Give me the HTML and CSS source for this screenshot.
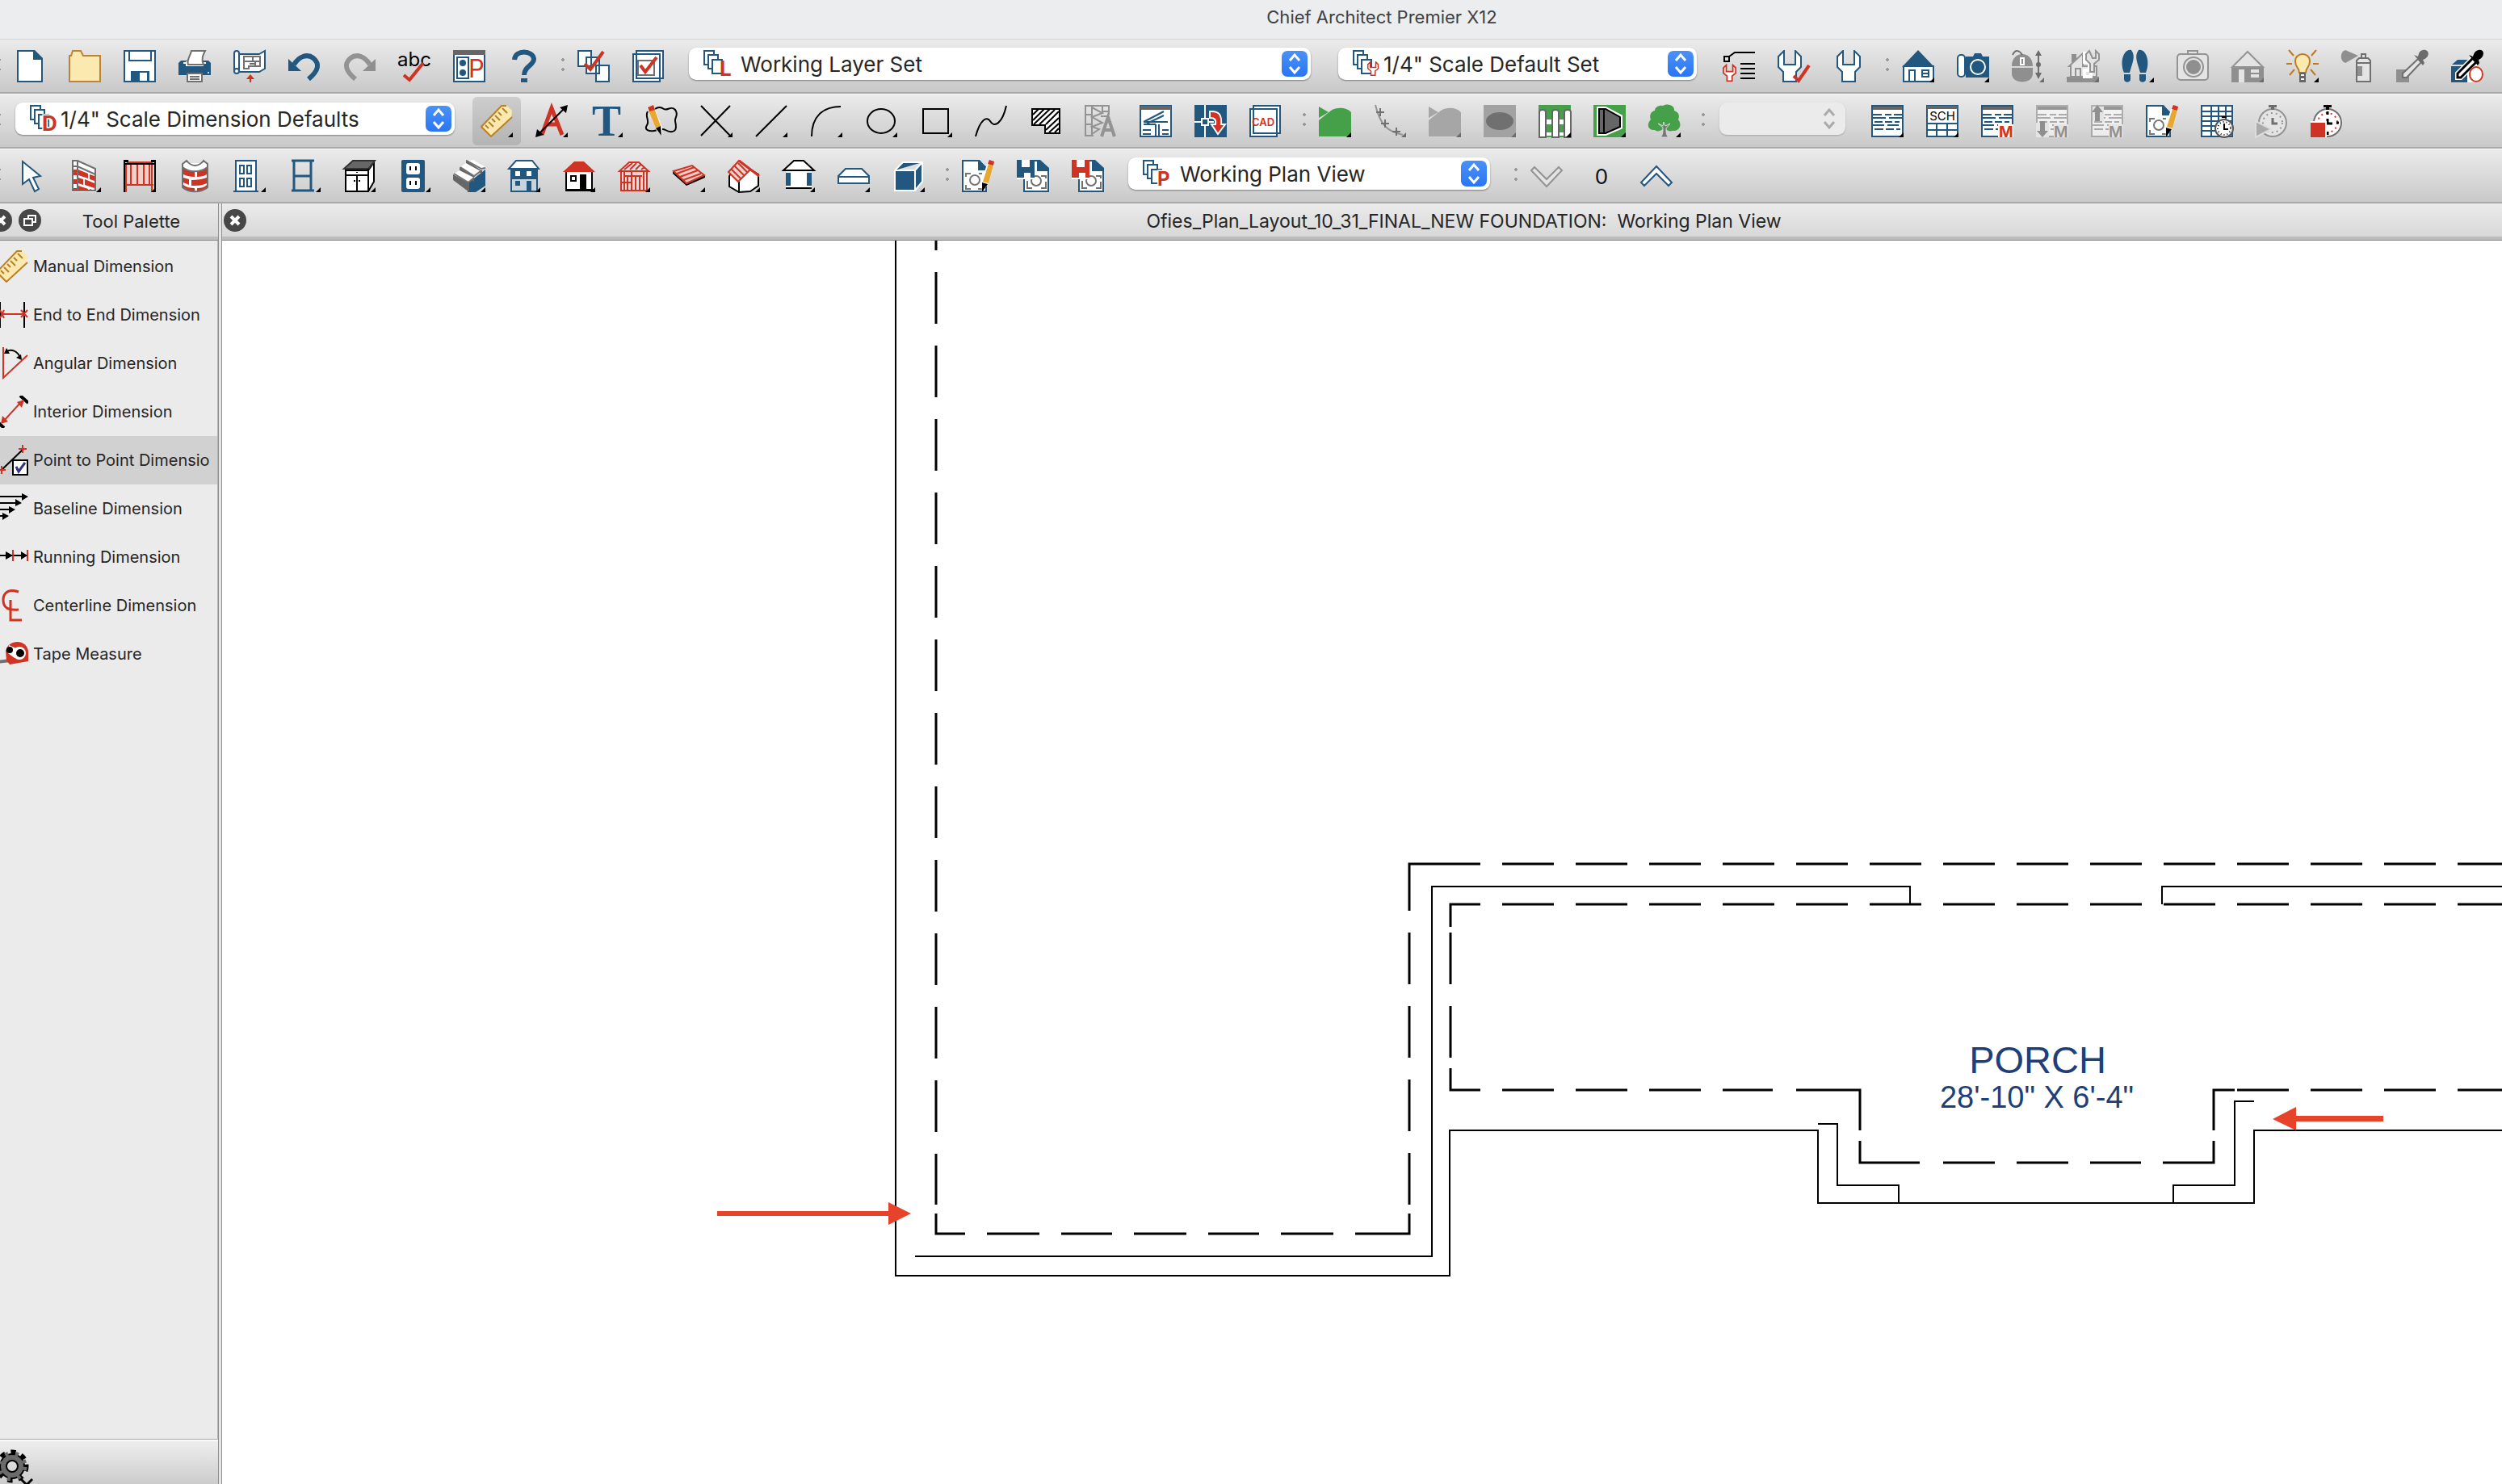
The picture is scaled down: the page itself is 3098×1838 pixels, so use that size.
FILE: index.html
```html
<!DOCTYPE html>
<html lang="en">
<head>
<meta charset="utf-8">
<title>Chief Architect Premier X12</title>
<link rel="stylesheet" href="styles.css">
</head>
<body>
<svg class="defs" aria-hidden="true">
  <symbol id="more" viewBox="0 0 40 40"><path d="M40 34v6h-6z"/></symbol>
  <symbol id="stack" viewBox="0 0 32 32"><g fill="#fff" stroke="#22577f" stroke-width="2"><path d="M1 1h12v17H1z"/><path d="M6 6h12v17H6z"/><path d="M11 12h12v17H11z"/></g></symbol>
  <symbol id="updown" viewBox="0 0 32 32"><path d="M10 12l6-7 6 7M10 20l6 7 6-7" fill="none" stroke="currentColor" stroke-width="3"/></symbol>
  <symbol id="pencilpage" viewBox="0 0 40 40"><path d="M1 1h20l9 9v29H1z" fill="#fff" stroke="#22577f" stroke-width="2"/><path d="M20 0h2l9 11v2H20z" fill="#22577f"/><path d="M5 21v-4h6M5 31v5h6M21 17h4M20 36h5" fill="none" stroke="#777" stroke-width="2"/><circle cx="16" cy="25" r="6" fill="#fff" stroke="#777" stroke-width="2"/><path d="M32 3l8 3-7 23-8 11-1-14z" fill="#fff"/><path d="M33 5l6 2-6 22-7-2z" fill="#e8a733"/><path d="M34 0l6 2-1 5-7-2z" fill="#cf3323"/><path d="M25 28l7 2-7 10z"/></symbol>
  <symbol id="schedule" viewBox="0 0 40 40"><path d="M1 1h38v38H1z" fill="#fff" stroke="currentColor" stroke-width="2"/><path d="M2 2h36v4H2z" fill="#666"/><path d="M2 12h11M17 12h8M28 12h10M2 16h16M22 16h16M4 21h10M17 21h9M29 21h6M2 25h14M20 25h14M4 30h11M18 30h10M31 30h5" stroke="currentColor" stroke-width="2"/></symbol>
  <symbol id="wrench" viewBox="0 0 40 40"><path d="M13 1L6 8v13l6 6v12h16V27l6-6V8l-7-7v17h-5l-4 0h-5z" fill="#fff" stroke="currentColor" stroke-width="2"/></symbol>
  <symbol id="wrench-small" viewBox="0 0 20 24"><path d="M5 1L1 5v7l5 4v7h7v-7l5-4V5l-4-4v9H5z" fill="#fff" stroke="#cf3323" stroke-width="2"/></symbol>
  <symbol id="ruler" viewBox="0 0 40 40"><path d="M25 1h8l6 6-1 10L13 39 1 27z" fill="#fbe9b0"/><path d="M39 15L13 39 1 27 26 1h6M27 4l6 6M22 9l4 4M18 13l6 6M14 17l4 4M10 21l6 6M6 25l4 4" fill="none" stroke="#b98025" stroke-width="2"/></symbol>
</svg>

<div class="app">
<header class="window-title"><h1>Chief Architect Premier X12</h1></header>

<div class="toolbar" role="toolbar" aria-label="Standard">
  <span class="grip"></span>
  <button class="tool" aria-label="New"><svg viewBox="0 0 40 40"><path class="sb fw" d="M5 1h20l10 10v28H5z"/><path class="fb" d="M24 0h2l10 10v2H24z"/></svg></button>
  <button class="tool" aria-label="Open"><svg viewBox="0 0 40 40"><path fill="#fbe9b0" stroke="#bd8338" d="M1 39V7h2l2-6h10l3 6h21v32z"/></svg></button>
  <button class="tool" aria-label="Save"><svg viewBox="0 0 40 40"><path class="sb fw" d="M1 1h38v38H1zM7 1h27v12H7z"/><path class="fb" d="M9 26h23v14H9z"/><path class="fw" d="M20 28h9v10h-9z"/></svg></button>
  <button class="tool" aria-label="Print"><svg viewBox="0 0 40 40"><path class="fb" d="M0 16l3-3h34l3 3v15H0z"/><path class="sw" d="M6 16h28"/><path class="fw" d="M9 14h22v6H9z"/><path class="fw sd" d="M12 18c-2-6 2-9 4-17h17c-3 6-5 10-2 17zM11 29h18v10H11z"/><path class="sd" d="M14 33h12M14 36h12"/><circle class="fw" cx="37" cy="28" r="1"/></svg></button>
  <button class="tool" aria-label="Send to Layout"><svg viewBox="0 0 40 40"><path class="sb fw" d="M6 5h26l7-4v22l-7 4H7z"/><path class="sb fw" d="M1 4c0-4 6-4 6 0v20c0 5-6 5-6 0z"/><circle class="sb fw" cx="4" cy="26" r="3"/><path class="sd" d="M13 8h20v12H19v3h-6zM24 8v5M13 14h8M20 14h13M27 14v6M20 17h6"/><path class="fr" d="M21 30l5 6h-4v4h-2v-4h-4z"/></svg></button>
  <button class="tool" aria-label="Undo"><svg viewBox="0 0 40 40"><path class="sb w6" d="M7 18C13 8 23 4 31 10c8 7 7 15-6 26"/><path class="fb" d="M0 11l16 15H0z"/></svg></button>
  <button class="tool" aria-label="Redo"><svg viewBox="0 0 40 40"><g transform="matrix(-1 0 0 1 40 0)"><path class="sg w6" d="M7 18C13 8 23 4 31 10c8 7 7 15-6 26"/><path class="fg" d="M0 11l16 15H0z"/></g></svg></button>
  <button class="tool" aria-label="Spell Check"><svg viewBox="0 0 40 40"><text x="20" y="20" text-anchor="middle" font-size="24">abc</text><path class="sr w4" d="M7 31l7 6L31 16"/></svg></button>
  <button class="tool" aria-label="Preferences"><svg viewBox="0 0 40 40"><path class="sb fw" d="M1 1h38v38H1z"/><path fill="#666" d="M0 0h40v6H0z"/><path class="sb" d="M5 9h14v26H5z"/><circle class="fb" cx="12" cy="16" r="4"/><circle class="fb" cx="12" cy="28" r="4"/><text class="fr" x="19" y="34" font-size="31">P</text></svg></button>
  <button class="tool" aria-label="Help"><svg viewBox="0 0 40 40"><path class="sb w6" d="M8 12C9-1 31 0 32 11c0 8-12 9-12 20"/><path class="fb" d="M16 35h8v5h-8z"/></svg></button>
  <span class="grip"></span>
  <button class="tool" aria-label="Layer Display"><svg viewBox="0 0 40 40"><path class="sb fw" d="M1 1h16v19H1zM11 9h16v20H11zM23 19h16v20H23z"/><path class="sr w4" d="M9 17l7 7L32 2"/></svg></button>
  <button class="tool" aria-label="Active Layer Display"><svg viewBox="0 0 40 40"><path class="sb fw" d="M5 1h33v34H5zM1 5h33v34H1z"/><path class="sd" d="M7 13h20v18H7z"/><path class="sr w4" d="M10 19l6 8L30 9"/></svg></button>
  <div class="combo combo-wide">
    <svg class="combo-icon" viewBox="0 0 32 32"><use href="#stack"/><text class="fr bold" x="20" y="32" font-size="26">L</text></svg>
    <select class="inset" aria-label="Layer set"><option>Working Layer Set</option></select>
    <svg class="combo-arrows" viewBox="0 0 32 32"><use href="#updown"/></svg>
  </div>
  <div class="combo combo-set">
    <svg class="combo-icon" viewBox="0 0 32 32"><use href="#stack"/><use href="#wrench-small" x="18" y="14" width="15" height="18"/></svg>
    <select aria-label="Default set"><option>1/4" Scale Default Set</option></select>
    <svg class="combo-arrows" viewBox="0 0 32 32"><use href="#updown"/></svg>
  </div>
  <button class="tool" aria-label="Default Settings"><svg viewBox="0 0 40 40"><path class="sk" d="M8 8l7-5h25M2 8h6v6H2zM22 17h18M22 23h18M22 29h18M22 35h18"/><use href="#wrench-small" x="0" y="17" width="18" height="23"/></svg></button>
  <button class="tool blue" aria-label="Active Defaults"><svg viewBox="0 0 40 40"><use href="#wrench" x="-5"/><path class="sr w4" d="M20 32l6 6L39 19"/></svg></button>
  <button class="tool blue" aria-label="Edit Defaults"><svg viewBox="0 0 40 40"><use href="#wrench"/></svg></button>
  <span class="grip"></span>
  <button class="tool" aria-label="Full Camera"><svg viewBox="0 0 40 40"><path class="sb fw" d="M2 20h37v19H2z"/><path class="fb" d="M20 0l20 21H0z"/><path class="sb" d="M9 39V25h7v14M25 25h8v8h-8zM25 29h8"/><use href="#more"/></svg></button>
  <button class="tool" aria-label="Camera"><svg viewBox="0 0 40 40"><path class="fb" d="M11 8h9l2-4h8l2 4h8v26H11z"/><rect class="sb fw" x="1" y="6" width="9" height="27" rx="4"/><circle class="sw" cx="26" cy="21" r="9"/><use href="#more"/></svg></button>
  <button class="tool" aria-label="Mouse Orbit" disabled><svg viewBox="0 0 40 40"><path class="fg" d="M0 20C0 0 26 0 26 20zM0 22h26v7c0 14-26 14-26 0z"/><path class="sd" d="M1 6c4-8 9-5 12 0"/><path class="sw fg" d="M11 10h4v8h-4z"/><path class="sd" d="M33 5v26"/><path class="fd" d="M33 0l4 7h-8zM33 36l4-8h-8z"/><circle class="fd" cx="33" cy="18" r="3"/><use class="fd" href="#more"/></svg></button>
  <button class="tool" aria-label="House Wizard" disabled><svg viewBox="0 0 40 40"><path class="fg" d="M0 33h40v7H0zM6 5h6v10H6z"/><path class="sg fl" d="M5 33V20H3L20 4v16h17v13h-9v-6h-7v6zM11 33V23h6v10"/><path class="sw w4 fl" d="M25 2v8l5 5v18h-8v-8h6v-10l-6 0V2M37 2v10l-5 3"/><path class="sg fl" d="M28 1l-4 4v7l5 5v10h5V17l6-5V5l-4-4v9h-4z"/><use class="fd" href="#more"/></svg></button>
  <button class="tool" aria-label="Walkthrough"><svg viewBox="0 0 40 40"><path class="fb" d="M12 0c6 8 1 16-2 28H3C-3 14 3-2 12 0zM3 30h8v6c0 5-8 5-8 0z"/><path class="fb" d="M21 0c-6 8-1 16 2 28h7C36 14 30-2 21 0zM22 30h8v6c0 5-8 5-8 0z"/><use href="#more"/></svg></button>
  <button class="tool" aria-label="Final View" disabled><svg viewBox="0 0 40 40"><path class="sg" d="M14 5V1h12v4"/><rect class="sg fl" x="1" y="5" width="38" height="32" rx="4"/><circle class="sg fl" cx="21" cy="21" r="12"/><circle class="fg" cx="21" cy="21" r="9"/></svg></button>
  <button class="tool" aria-label="Exterior View" disabled><svg viewBox="0 0 40 40"><path class="fg" d="M0 21h40v19H0z"/><path class="sg fl" d="M20 2l19 19H1z"/><path class="fl" d="M9 24h7v16H9zM24 24h10v4H24zM24 30h10v4H24z"/><use class="fd" href="#more"/></svg></button>
  <button class="tool" aria-label="Lights"><svg viewBox="0 0 40 40"><path stroke="#bd7b20" d="M3 0l6 7M37 0l-6 7M0 17h7M33 17h7M4 31l6-7M36 31l-6-7"/><path fill="#fbe9b0" stroke="#bd7b20" d="M16 28c0-7-5-6-5-14 0-12 18-12 18 0 0 8-5 7-5 14z"/><path fill="#666" d="M16 28h8v12h-8z"/><path class="sw" d="M18 31h4M18 36h4"/><use href="#more"/></svg></button>
  <button class="tool" aria-label="Material Painter" disabled><svg viewBox="0 0 40 40"><path class="fg" d="M5 0l16 7-16 9C-2 14-2 2 5 0z"/><path class="sd fl" d="M19 39V13l3-3h11l3 3v26zM19 16h17M25 10V5h5v5"/><path class="fg" d="M20 20h6v12h-6z"/></svg></button>
  <button class="tool" aria-label="Eyedropper" disabled><svg viewBox="0 0 40 40"><path class="fg" d="M0 24h16v16H0z"/><path class="sd fl" d="M8 34v-5L27 11l4 4-18 19z"/><path class="fd" d="M22 6l11 13 2-3-2-4c10-3 8-14 0-12-5 1-5 5-6 8z"/></svg></button>
  <button class="tool" aria-label="Object Eyedropper"><svg viewBox="0 0 40 40"><path class="fb" d="M0 20h20v20H0zM1 18l7-6h14l-6 6z"/><path class="fw" d="M20 20l12-6v26H20z"/><path fill="none" stroke="#fff" stroke-width="6" d="M8 34v-5L27 10l4 5-19 19z"/><path class="sk w3 fw" d="M8 34v-5L27 10l4 5-19 19z"/><path d="M22 6l11 13 2-3-1-4c8-3 8-14 0-12-5 1-6 5-7 8z"/><ellipse class="fw" cx="31" cy="30" rx="9" ry="10"/><ellipse class="sr" cx="31" cy="30" rx="8" ry="9"/></svg></button>
</div>

<div class="toolbar" role="toolbar" aria-label="Drafting">
  <span class="grip"></span>
  <div class="combo combo-dim">
    <svg class="combo-icon" viewBox="0 0 32 32"><use href="#stack"/><text class="fr bold halo" x="15" y="32" font-size="26">D</text></svg>
    <select aria-label="Dimension defaults"><option>1/4" Scale Dimension Defaults</option></select>
    <svg class="combo-arrows" viewBox="0 0 32 32"><use href="#updown"/></svg>
  </div>
  <button class="tool active" aria-label="Dimension" aria-pressed="true"><svg viewBox="0 0 40 40"><use href="#ruler"/><use href="#more"/></svg></button>
  <button class="tool" aria-label="Leader Text"><svg viewBox="0 0 40 40"><path class="sr w5" d="M8 37L20 4l13 33M12 24h16"/><path class="sk" d="M4 36L36 4"/><path d="M40 0l-2 10-8-7zM0 40l2-10 8 7z"/><use href="#more"/></svg></button>
  <button class="tool" aria-label="Text"><svg viewBox="0 0 40 40"><text class="fb serif" x="20" y="38" text-anchor="middle" font-size="54">T</text><use href="#more"/></svg></button>
  <button class="tool" aria-label="Revision Cloud"><svg viewBox="0 0 40 40"><path class="sk" d="M3 8c-4 7 3 11-1 17s3 8 9 7 9-4 14-1 8 3 11 1 2-8 1-12 5-8 0-14-10 2-14-1-7-3-11 0"/><path class="fw" d="M2 3l8-3 11 28v10l-7-6z"/><path fill="#e8a733" d="M4 7l7-3 8 22-6 3z"/><path class="fr" d="M3 3l7-3 2 6-7 2z"/><path d="M13 29l6-3 1 12z"/></svg></button>
  <button class="tool" aria-label="Point"><svg viewBox="0 0 40 40"><path class="sk" d="M1 1l36 37M37 1L1 38"/><use href="#more"/></svg></button>
  <button class="tool" aria-label="Line"><svg viewBox="0 0 40 40"><path class="sk" d="M1 39L39 1"/><use href="#more"/></svg></button>
  <button class="tool" aria-label="Arc"><svg viewBox="0 0 40 40"><path class="sk" d="M2 39C2 14 16 2 38 2"/><use href="#more"/></svg></button>
  <button class="tool" aria-label="Circle"><svg viewBox="0 0 40 40"><ellipse class="sk" cx="20" cy="20" rx="17" ry="15"/><use href="#more"/></svg></button>
  <button class="tool" aria-label="Box"><svg viewBox="0 0 40 40"><path class="sk" d="M4 5h31v30H4z"/><use href="#more"/></svg></button>
  <button class="tool" aria-label="Spline"><svg viewBox="0 0 40 40"><path class="sk" d="M1 39c6-22 14-25 18-19 5 9 15 3 20-19"/></svg></button>
  <button class="tool" aria-label="Hatch"><svg viewBox="0 0 40 40"><path class="sk fw" d="M3 5h34v30H19V25H3z"/><path class="sk" d="M4 12l7-7M4 19L18 5M5 24L25 5M12 24L31 6M20 24L36 8M20 31l16-15M24 34l12-11M31 34l5-5"/></svg></button>
  <button class="tool" aria-label="CAD to Walls" disabled><svg viewBox="0 0 40 40"><path class="sg" d="M1 0v39M9 0v39M1 1h28M22 0v10M30 0v12M9 3l13 7-13 5 13 7-13 5 9 3-9 6M1 12h8M1 24h8M1 38h10M22 8h8M20 14h10"/><path class="sg w4" d="M21 39l8-24 8 24M24 31h11"/></svg></button>
  <button class="tool blue" aria-label="CAD Detail"><svg viewBox="0 0 40 40"><path class="sb fw" d="M1 1h38v38H1z"/><path fill="#666" d="M1 1h38v5H1z"/><path class="sb" d="M5 21h30M5 21L30 8M9 23L30 13M5 24h15M20 24v14M24 24v14M4 31h10M4 36h10M28 31h8M28 36h8"/></svg></button>
  <button class="tool" aria-label="Import Drawing"><svg viewBox="0 0 40 40"><path class="fb" d="M0 0h40v40H0z"/><path class="sw" d="M13 0v18M13 25v15M0 21h9M17 21h7M9 17h8v8H9z"/><path fill="#cf3323" stroke="#fff" d="M19 8c12-1 15 5 14 16h5l-9 12-8-12h5c1-6-1-8-7-8z"/></svg></button>
  <button class="tool" aria-label="CAD Block"><svg viewBox="0 0 40 40"><path class="sb fw" d="M5 1h33v34H5zM1 5h33v34H1z"/><text class="fr strong" x="17" y="26" text-anchor="middle" font-size="13">CAD</text></svg></button>
  <span class="grip"></span>
  <button class="tool" aria-label="Terrain"><svg viewBox="0 0 40 40"><path class="fe" d="M0 2l12 7L0 16z"/><path class="fe" d="M0 19L15 7C22 3 33 2 40 9v30H0z"/><use href="#more"/></svg></button>
  <button class="tool" aria-label="Elevation Points" disabled><svg viewBox="0 0 40 40"><path class="sg" d="M2 0c6 25 15 33 34 37"/><path class="sd" d="M3 9h10M8 4v10M9 23h10M14 18v10M23 33h10M28 28v10"/><use class="fd" href="#more"/></svg></button>
  <button class="tool" aria-label="Terrain Feature" disabled><svg viewBox="0 0 40 40"><path fill="#a6a6a6" d="M0 2l12 7L0 16zM0 19L15 7C22 3 33 2 40 9v30H0z"/><use class="fd" href="#more"/></svg></button>
  <button class="tool" aria-label="Pond" disabled><svg viewBox="0 0 40 40"><path fill="#a2a2a2" d="M0 0h40v40H0z"/><ellipse fill="#707070" cx="20" cy="20" rx="17" ry="11"/><use class="fd" href="#more"/></svg></button>
  <button class="tool" aria-label="Fence"><svg viewBox="0 0 40 40"><path class="fe" d="M0 0h40v40H0z"/><path class="fw" d="M0 18h40v6H0zM0 34h40v4H0z"/><path fill="#fff" stroke="#666" d="M1 40V9c0-4 8-4 8 0v31zM17 40V9c0-4 8-4 8 0v31zM32 40V9c0-4 8-4 8 0v31z"/><use href="#more"/></svg></button>
  <button class="tool" aria-label="Road"><svg viewBox="0 0 40 40"><path class="fe" d="M0 0h40v40H0z"/><path fill="#666" stroke="#fff" stroke-width="4" d="M6 4h9l19 10v14L15 36H6z"/><path stroke="#000" fill="#666" d="M7 5h8l18 10v12L15 35H7zM13 5v30"/><use href="#more"/></svg></button>
  <button class="tool" aria-label="Plants"><svg viewBox="0 0 40 40"><path class="fe" d="M18 1c8-4 15 1 14 6 6 2 7 7 5 11 6 8 0 15-7 14-4 1-6 0-8-2h-4c-4 3-8 3-10 1-8 1-11-7-5-13C1 13 3 8 8 7c0-4 5-7 10-6z"/><path fill="#777" stroke="#dcdcdc" stroke-width="1" d="M15 40c3-3 3-6 3-12l-6-5 6 3 1-5 2 5 6-3-5 6c0 5 0 8 3 11z"/><use href="#more"/></svg></button>
  <span class="grip"></span>
  <div class="combo combo-off">
    <select aria-label="Sun angle" disabled><option></option></select>
    <svg class="combo-arrows" viewBox="0 0 32 32"><use href="#updown"/></svg>
  </div>
  <button class="tool blue" aria-label="Schedule"><svg viewBox="0 0 40 40"><use href="#schedule"/><use href="#more" class="fk"/></svg></button>
  <button class="tool" aria-label="Schedule Table"><svg viewBox="0 0 40 40"><path class="sb fw" d="M1 1h38v38H1zM1 23h38M1 31h38M13 23v16M26 23v16"/><path fill="#666" d="M1 1h38v4H1z"/><text x="20" y="19" text-anchor="middle" font-size="15">SCH</text><use href="#more"/></svg></button>
  <button class="tool blue" aria-label="Materials List"><svg viewBox="0 0 40 40"><use href="#schedule"/><path class="fw" d="M21 24h19v16H21z"/><text class="fr bold" x="22" y="40" font-size="19">M</text></svg></button>
  <button class="tool" aria-label="Materials Below" disabled><svg viewBox="0 0 40 40"><g opacity=".6"><use href="#schedule"/></g><path class="fl" d="M0 22h16v18H0zM22 24h18v16H22z"/><path class="fg" d="M5 20h6v12h4l-7 8-7-8h4z"/><text class="fg strong" x="22" y="40" font-size="19">M</text></svg></button>
  <button class="tool" aria-label="Materials Above" disabled><svg viewBox="0 0 40 40"><g opacity=".6"><use href="#schedule"/></g><path class="fl" d="M2 2h14v18H2zM22 24h18v16H22z"/><path class="fg" d="M5 20h6V9h4L8 0 1 9h4z"/><text class="fg strong" x="22" y="40" font-size="19">M</text></svg></button>
  <button class="tool" aria-label="Edit Page"><svg viewBox="0 0 40 40"><use href="#pencilpage"/></svg></button>
  <button class="tool" aria-label="Time Tracker"><svg viewBox="0 0 40 40"><path class="sb fw" d="M1 1h38v38H1zM1 8h38M1 14h38M1 20h38M1 26h38M1 32h38M13 1v38M22 1v38M31 1v38"/><circle fill="#fff" stroke="#555" cx="29" cy="29" r="11"/><circle class="sk" cx="29" cy="29" r="8" stroke-dasharray="1 3"/><path class="sk" d="M29 23v7h5M26 15h6"/></svg></button>
  <button class="tool" aria-label="Start Timer" disabled><svg viewBox="0 0 40 40"><circle class="sg fl" cx="21" cy="22" r="17"/><circle class="sg" cx="21" cy="22" r="12" stroke-dasharray="2 4"/><path class="sd w3" d="M21 16v7h6"/><path class="fd" d="M16 0h10v3h-3v3h-4V3h-3z"/><path fill="#aaa" stroke="#ddd" d="M0 20l19 10L0 40z"/></svg></button>
  <button class="tool" aria-label="Stop Timer"><svg viewBox="0 0 40 40"><circle class="sd fw" cx="21" cy="22" r="17"/><circle class="sr" cx="21" cy="22" r="12" stroke-dasharray="2 4"/><path class="sk w3" d="M21 8v4M21 17v6h6M32 22h3M21 33v4"/><path d="M16 0h10v3h-3v3h-4V3h-3z"/><path class="fw" d="M0 20h20v20H0z"/><path class="fr" d="M0 22h18v18H0z"/></svg></button>
</div>

<div class="toolbar" role="toolbar" aria-label="Building">
  <span class="grip"></span>
  <button class="tool" aria-label="Select Objects"><svg viewBox="0 0 40 40"><path class="sb fw" d="M11 2v28l8-6 7 15 5-3-7-14 9-2z"/></svg></button>
  <button class="tool" aria-label="Wall"><svg viewBox="0 0 40 40"><path fill="#fff" d="M4 1h7l23 11v28H4z"/><path class="fr" d="M5 12h6v7H5zM5 24h6v6H5zM5 35h6v4H5zM12 12l12 5v6l-12-4zM26 18l6 2v6l-6-2zM12 22l6 2v7l-6-2zM20 24l12 5v6l-12-4zM12 32l12 4v3H12zM26 36l6 2v1h-6z"/><path class="sd" d="M5 39V1h6l22 10v27H5M11 1v38M5 8h6l22 10"/><use href="#more"/></svg></button>
  <button class="tool" aria-label="Railing"><svg viewBox="0 0 40 40"><path fill="#f4cfca" d="M3 4h34v28H3z"/><path class="sr" d="M3 31h34M9 5v26M17 5v26M25 5v26M32 5v26M3 4v36M35 4v36"/><path class="sr" d="M4 3h32"/><path d="M0 4h40v2H0zM0 0h6v3H0zM34 0h6v3h-6zM0 2h2v38H0zM38 2h2v38h-2z"/><use href="#more"/></svg></button>
  <button class="tool" aria-label="Curved Wall"><svg viewBox="0 0 40 40"><path class="fw" d="M5 4h31v30c-8 7-23 7-31 0z"/><path class="fr" d="M6 10c4 4 9 4 14 4v7c-6 0-10-1-14-3zM23 14c5 0 9-1 12-4v8c-3 2-7 3-12 3zM6 22l7 2v7l-7-3zM16 25c7 0 14-1 19-3v7c-6 3-13 3-19 3zM6 31c4 3 9 4 14 4v4c-6 0-10-2-14-5zM23 35c5 0 9-1 12-4v3c-3 3-7 4-12 5z"/><path class="sd fw" d="M5 5l5-4c6 8 15 8 21 0l5 4v4c-9 7-23 7-31 0z"/><path class="sd" d="M5 5v29c8 7 23 7 31 0V5"/></svg></button>
  <button class="tool" aria-label="Door"><svg viewBox="0 0 40 40"><path class="sb fw" d="M3 1h25v38H3zM8 7h5v10H8zM17 7h5v10h-5zM8 23h5v10H8zM17 23h5v10h-5z"/><path class="sb" d="M0 39h31"/><use href="#more"/></svg></button>
  <button class="tool" aria-label="Window"><svg viewBox="0 0 40 40"><path class="sb w3" d="M4 1h28M4 38h28M7 1v37M28 1v37M7 20h21"/><use href="#more"/></svg></button>
  <button class="tool" aria-label="Cabinet"><svg viewBox="0 0 40 40"><path class="sk fw" d="M3 13h28L38 3v24l-7 12H3z"/><path fill="#666" stroke="#333" d="M1 11L12 1h27l-8 10z"/><path class="sk" d="M31 11v28M3 19h28M17 19v20M14 25v2M20 25v2M17 15v1"/><use href="#more"/></svg></button>
  <button class="tool" aria-label="Electrical"><svg viewBox="0 0 40 40"><rect class="fb" x="4" width="29" height="40" rx="2"/><rect class="fw" x="10" y="4" width="17" height="14" rx="3"/><rect class="fw" x="10" y="22" width="17" height="14" rx="3"/><path class="sk" d="M15 8v5M22 8v5M15 26v5M22 26v5"/><use href="#more"/></svg></button>
  <button class="tool" aria-label="Stairs"><svg viewBox="0 0 40 40"><path class="fb" d="M40 12v20l-12 8H18V29z"/><path fill="#666" d="M0 18l20 11v11L0 25zM8 9l18 11v7L8 16zM16 0l20 11v6L16 6z"/><path class="fw" d="M1 17l7-4 18 9-8 5zM9 9l7-5 18 10-8 5zM17 1l8-1 15 9-5 4z"/><path class="sd" d="M1 17l18 11 7-6M9 9l17 11 8-6M17 1l18 10 5-1"/><use href="#more"/></svg></button>
  <button class="tool" aria-label="Floor"><svg viewBox="0 0 40 40"><path class="fb" d="M3 10h34v30H3z"/><path class="sb fw" d="M10 1h20l8 10H1z"/><path class="fw" d="M9 14h6v6H9zM23 14h6v6h-6z"/><path fill="#c9d3dc" d="M5 24h30v14H5z"/><path class="fb" d="M9 26h6v6H9zM23 26h6v12h-6z"/><use href="#more"/></svg></button>
  <button class="tool" aria-label="Roof"><svg viewBox="0 0 40 40"><path class="sk fw" d="M4 14h32v24H4z"/><path class="fr" d="M14 2h12l14 13H0z"/><path d="M21 18h8v20h-8zM3 36h37v3H3z"/><path class="sk fw" d="M10 20h6v6h-6z"/><use href="#more"/></svg></button>
  <button class="tool" aria-label="Framing"><svg viewBox="0 0 40 40"><path fill="#f0d6d3" d="M3 14h33v24H3z"/><path class="sr" d="M14 3h12l12 11H2zM4 14v24h32V14M8 14v24M12 20v18M17 14v24M22 20v18M27 20v18M32 14v24M4 28h14M8 20h22M8 12l10-8M15 12l8-8M22 12l6-6M29 12l4-3"/><use href="#more"/></svg></button>
  <button class="tool" aria-label="Roof Plane"><svg viewBox="0 0 40 40"><path d="M0 14l17 16 23-11v3L17 32 0 17z"/><path fill="#f4cfca" stroke="#cf3323" d="M1 14l23-7 15 12-22 10zM5 17l22-8M9 21l22-8M13 25l22-8"/><use href="#more"/></svg></button>
  <button class="tool" aria-label="Dormer"><svg viewBox="0 0 40 40"><path class="sk fw" d="M2 20v13l12 7 14-1 10-7V18L14 3z"/><path class="sk" d="M14 27v13"/><path fill="#f4cfca" stroke="#cf3323" d="M14 1L1 15l12 12 15-15zM5 12l12 12M9 8l12 12M13 4l12 12"/><path class="sr w3" d="M14 1l25 19"/><use href="#more"/></svg></button>
  <button class="tool" aria-label="Ceiling"><svg viewBox="0 0 40 40"><path class="fw" d="M4 14h32v22H4z"/><path class="sk fw" d="M14 1h12l13 12H1z"/><path class="fb" d="M4 16h6v16H4zM30 16h6v16h-6z"/><path class="sk" d="M4 35h32"/><use href="#more"/></svg></button>
  <button class="tool" aria-label="Slab"><svg viewBox="0 0 40 40"><path class="sb fw" d="M1 20l9-9h20l9 9v9H1zM1 21h38"/><use href="#more"/></svg></button>
  <button class="tool" aria-label="Primitive"><svg viewBox="0 0 40 40"><path fill="#22577f" stroke="#fff" d="M3 13l10-10h24v24l-9 11H3zM3 13h25l9-10M28 13v25"/><use href="#more"/></svg></button>
  <span class="grip"></span>
  <button class="tool" aria-label="Edit Plan View"><svg viewBox="0 0 40 40"><use href="#pencilpage"/></svg></button>
  <button class="tool" aria-label="Save Plan View"><svg viewBox="0 0 40 40"><path class="sb fw" d="M9 1h18l12 12v26H9z"/><path class="fb" d="M25 0h4l11 10v4H25z"/><path class="sd" d="M13 26v9h6M36 27v8h-6M30 20h6v3"/><circle class="sd" cx="24" cy="26" r="6"/><path class="fw" d="M0 0h22v24H0z"/><path class="fb" d="M0 0h6v9h10V0h6v22h-5v-6h-8v6H0z"/></svg></button>
  <button class="tool" aria-label="Save Plan View As"><svg viewBox="0 0 40 40"><path class="sb fw" d="M9 1h18l12 12v26H9z"/><path class="fb" d="M25 0h4l11 10v4H25z"/><path class="sd" d="M13 26v9h6M36 27v8h-6M30 20h6v3"/><circle class="sd" cx="24" cy="26" r="6"/><path class="fw" d="M0 0h22v24H0z"/><path class="fr" d="M0 0h6v9h10V0h6v22h-5v-6h-8v6H0z"/></svg></button>
  <div class="combo combo-view">
    <svg class="combo-icon" viewBox="0 0 32 32"><use href="#stack"/><text class="fr bold halo" x="18" y="32" font-size="24">P</text></svg>
    <select class="inset" aria-label="Plan view"><option>Working Plan View</option></select>
    <svg class="combo-arrows" viewBox="0 0 32 32"><use href="#updown"/></svg>
  </div>
  <span class="grip"></span>
  <button class="tool" aria-label="Down One Floor" disabled><svg viewBox="0 0 40 40"><path class="sg fl" d="M5 9l15 15L35 9l4 4-19 20L1 13z"/></svg></button>
  <output class="floor" aria-label="Current floor">0</output>
  <button class="tool" aria-label="Up One Floor"><svg viewBox="0 0 40 40"><path class="sb fw" d="M5 32l15-15 15 15 4-4L20 8 1 28z"/></svg></button>
</div>

<main class="workspace">
  <aside class="palette">
    <div class="dock-head">
      <button class="round lead" aria-label="Close palette"><svg viewBox="0 0 28 28"><circle cx="14" cy="14" r="14"/><path d="M9 9l10 10M19 9L9 19"/></svg></button>
      <button class="round" aria-label="Undock palette"><svg viewBox="0 0 28 28"><circle cx="14" cy="14" r="14"/><path class="thin" d="M12 11V8h9v8h-4M7 12h10v8H7z"/></svg></button>
      <h2>Tool Palette</h2>
    </div>
    <ul class="tools">
      <li><button><svg viewBox="0 0 40 40"><use href="#ruler"/></svg>Manual Dimension</button></li>
      <li><button><svg viewBox="0 0 40 40"><path class="sk" d="M5 4v32M35 4v32"/><path class="sr" d="M6 19h30M5 14l5 10M10 14L5 24M31 14l8 9M39 14l-8 9"/></svg>End to End Dimension</button></li>
      <li><button><svg viewBox="0 0 40 40"><path class="sr" d="M9 0v38l30-28"/><path class="sk" d="M12 6c7-5 15-1 18 7"/><path d="M10 8l3-7 4 7zM32 16l-1-7-6 4z"/></svg>Angular Dimension</button></li>
      <li><button><svg viewBox="0 0 40 40"><path class="sk w4" d="M30 0l10 9M0 31l10 9"/><path class="sr" d="M10 31L31 8"/><path class="fr" d="M35 5l-3 10-6-7zM6 35l9-3-7-7z"/></svg>Interior Dimension</button></li>
      <li><button class="selected" aria-pressed="true"><svg viewBox="0 0 40 40"><path class="sk" d="M7 32L33 7"/><path class="sr" d="M28 6h10M33 1v10M2 32h10M7 27v10"/><path fill="#fff" stroke="#000" d="M21 20h18v18H21z"/><path fill="none" stroke="#34347f" stroke-width="3" d="M25 28l3 6 8-11"/></svg>Point to Point Dimension</button></li>
      <li><button><svg viewBox="0 0 40 40"><path class="sk" d="M0 5h34M0 13h26M0 21h16M0 29h8"/><path d="M32 1l8 4-8 5zM24 8l8 5-8 4zM16 17l8 4-8 5zM8 25l8 4-8 5z"/></svg>Baseline Dimension</button></li>
      <li><button><svg viewBox="0 0 40 40"><path class="sk" d="M0 18h38"/><path class="sr" d="M21 11v14M39 11v14"/><path d="M12 13l9 5-9 5zM31 13l8 5-8 5z"/></svg>Running Dimension</button></li>
      <li><button><svg viewBox="0 0 40 40"><path class="sr w3" d="M28 3C14-2 9 6 9 13c0 10 6 13 19 12M18 13v25h14"/></svg>Centerline Dimension</button></li>
      <li><button><svg viewBox="0 0 40 40"><path class="sd w4" d="M0 30l18-2"/><path class="fr" d="M12 16C16 0 40 2 40 18v11l-23 4-4-5z"/><circle class="fw" cx="29" cy="19" r="8"/><path class="fw" d="M16 9l9 4-2 12-8-6z"/><circle cx="30" cy="19" r="5"/><circle cx="17" cy="15" r="4"/></svg>Tape Measure</button></li>
    </ul>
    <div class="palette-foot">
      <button class="gear" aria-label="Palette options"><svg viewBox="0 0 46 46"><circle cx="20" cy="21" r="17" fill="none" stroke="#000" stroke-width="7" stroke-dasharray="6 7"/><circle cx="20" cy="21" r="11" fill="none" stroke="#000" stroke-width="10"/><circle cx="20" cy="21" r="16" fill="none" stroke="#6b6b6b" stroke-width="5" stroke-dasharray="4 9" stroke-dashoffset="-1"/><circle cx="20" cy="21" r="11" fill="none" stroke="#6b6b6b" stroke-width="6"/><path class="sk" d="M31 37l7 7 7-7"/></svg></button>
    </div>
  </aside>
  <div class="splitter"></div>
  <section class="document">
    <div class="dock-head">
      <button class="round" aria-label="Close view"><svg viewBox="0 0 28 28"><circle cx="14" cy="14" r="14"/><path d="M9 9l10 10M19 9L9 19"/></svg></button>
      <h2 class="doc-title">Ofies_Plan_Layout_10_31_FINAL_NEW FOUNDATION:&nbsp; Working Plan View</h2>
    </div>
    <div class="canvas">
      <svg class="plan" role="img" aria-label="Foundation plan">
        <g transform="translate(-275 -298)">
          <!-- foundation walls -->
          <path class="wall" d="M1109 298V1580H1795V1400H2251V1490H2791V1400H4200"/>
          <path class="wall" d="M1133 1556H1773V1098H2365V1120M2677 1120V1098H4200"/>
          <path class="wall" d="M2251 1392H2275V1468H2351V1490M2691 1490V1468H2767V1364H2791"/>
          <!-- footings -->
          <path class="footing dash" d="M1159 246V1492M1745 1155V1492M1860 1070H4200M1860 1120H4200M1860 1350H2195M2406 1440H2651M2770 1350H4200M1796 1155V1310"/>
          <path class="footing" d="M1159 1503V1528H1195M1222 1528H1287M1314 1528H1377M1404 1528H1469M1496 1528H1559M1586 1528H1651M1678 1528H1745V1503"/>
          <path class="footing" d="M1745 1128V1070H1833M1796 1148V1120H1833M1796 1323V1350H1833M2224 1350H2303V1400M2303 1413V1440H2377M2678 1440H2741V1413M2741 1400V1350H2767"/>
          <!-- markup arrows -->
          <g fill="#e6432a"><path d="M888 1500h212v-11l28 14-28 14v-11H888z"/><path d="M2951 1382h-108v-11l-29 15 29 14v-11h108z"/></g>
          <g class="room"><text x="2523" y="1329" font-size="47">PORCH</text><text x="2522" y="1372" font-size="38">28'-10" X 6'-4"</text></g>
        </g>
      </svg>
    </div>
  </section>
</main>
</div>
</body>
</html>
```
FILE: styles.css
```css
* { box-sizing: border-box; }
body { margin: 0; font-family: Inter, "Liberation Sans", sans-serif; color: #262626; }
button { border: 0; padding: 0; background: none; font: inherit; color: inherit; }
h1, h2 { margin: 0; font-size: 22px; font-weight: 400; white-space: nowrap; }
.defs { position: absolute; width: 0; height: 0; }

.app { display: flex; flex-direction: column; height: 100vh; overflow: hidden; }

.window-title { flex: none; height: 48px; padding: 0 0 6px 324px; display: flex; align-items: center; justify-content: center; background: #ebedee; color: #404142; }

/* Toolbars */
.toolbar { flex: none; display: flex; align-items: center; margin-left: -15px; padding: 3px 0 2px; overflow: hidden; border-top: 1px solid #fafafa; border-bottom: 2px solid #a9a9a9; background: linear-gradient(#ebebeb, #c9c9c9); }
.window-title + .toolbar { border-top-color: #d3d5d5; }
.grip { flex: none; width: 18px; height: 28px; padding-left: 12px; }
.grip::before { content: ""; display: block; width: 4px; height: 28px; background: radial-gradient(circle, #999 2px, transparent 2px) 0 0 / 4px 12px; }
.tool { flex: none; width: 60px; height: 60px; margin: 0 4px; padding: 10px; border-radius: 6px; }
.tool.active { background: linear-gradient(#cdcdcd, #b4b4b4); }
.tool svg { display: block; width: 40px; height: 40px; overflow: visible; fill: #000; stroke-width: 2; color: #8d8d8d; }
.tool.blue svg { color: #22577f; }
.floor { flex: none; width: 68px; text-align: center; font-size: 26px; color: #111; }

/* Icon paints */
.sb, .sr, .sk, .sg, .sd, .sw { fill: none; }
.sb { stroke: #22577f; }
.sr { stroke: #cf3323; }
.sk { stroke: #000; }
.sg { stroke: #939393; }
.sd { stroke: #707070; }
.sw { stroke: #fff; }
.fb { fill: #22577f; }
.fr { fill: #cf3323; }
.fk { fill: #000; }
.fg { fill: #8f8f8f; }
.fd { fill: #6c6c6c; }
.fl { fill: #e4e4e4; }
.fe { fill: #45a049; }
.fw { fill: #fff; }
.w3 { stroke-width: 3; }
.w4 { stroke-width: 4; }
.w5 { stroke-width: 5; }
.w6 { stroke-width: 6; }
.strong { font-weight: 600; }
.bold { font-weight: 700; }
.serif { font-family: "Liberation Serif", serif; font-weight: 700; }
.halo { stroke: #fff; stroke-width: 3; paint-order: stroke; }

/* Drop-downs */
.combo { flex: none; position: relative; margin: 0 18px 6px 16px; }
.combo select { appearance: none; display: block; width: 100%; height: 40px; margin: 0; padding: 0 44px 0 56px; border: 0; border-radius: 9px; background: #fff; box-shadow: 0 1px 2px #0006; font: 26px Inter, sans-serif; color: #262626; opacity: 1; }
.combo select.inset { padding-left: 64px; }
.combo-icon { position: absolute; left: 18px; top: 3px; width: 32px; height: 32px; overflow: visible; pointer-events: none; }
.combo-arrows { position: absolute; right: 4px; top: 4px; width: 32px; height: 32px; border-radius: 7px; background: linear-gradient(#4a92f8, #2a75f4); color: #fff; pointer-events: none; }
.combo-wide { width: 770px; }
.combo-set { width: 444px; }
.combo-dim { width: 544px; }
.combo-view { width: 448px; }
.combo-off { width: 156px; }
.combo-off select { background: #ebebeb; box-shadow: 0 1px 2px #0003; }
.combo-off .combo-arrows { background: none; color: #aaa; }

/* Workspace */
.workspace { flex: 1; min-height: 0; display: grid; grid-template-columns: 270px 5px minmax(0, 1fr); }
.palette { display: flex; flex-direction: column; min-width: 0; overflow: hidden; background: #ebebeb; }
.splitter { border: solid #8f8f8f; border-width: 0 1px; background: #e6e6e6; }
.dock-head { flex: none; display: flex; align-items: center; height: 46px; padding: 0 0 4px 2px; border-bottom: 1px solid #858585; background: linear-gradient(#ebebeb, #d8d8d8 41px, #bcbcbc 41px); }
.dock-head h2 { flex: 1; padding-top: 2px; text-align: center; }
.palette .dock-head h2 { padding-right: 4px; }
.dock-head .doc-title { padding-left: 214px; font-size: 23px; }
.round { flex: none; width: 28px; height: 28px; margin-right: 8px; }
.round.lead { margin-left: -15px; }
.round svg { display: block; fill: #474747; }
.round path { fill: none; stroke: #fff; stroke-width: 4; }
.round .thin { stroke-width: 2; fill: #474747; }

.tools { flex: 1; margin: 0; padding: 2px 0 0; list-style: none; border-right: 1px solid #b5b5b5; border-bottom: 1px solid #aaa; overflow: hidden; }
.tools button { display: flex; align-items: center; gap: 6px; width: 100%; height: 60px; margin: 0; padding-right: 9px; overflow: clip; overflow-clip-margin: content-box; font-size: 20px; white-space: nowrap; }
.tools button.selected { background: #d1d1d1; }
.tools svg { flex: none; width: 40px; height: 40px; margin-left: -5px; stroke-width: 2; }
.palette-foot { flex: none; height: 55px; padding-top: 10px; border-top: 2px solid #f8f8f8; background: linear-gradient(#eee, #ccc); overflow: hidden; }
.gear { display: block; width: 46px; height: 46px; margin-left: -5px; }
.gear svg { display: block; stroke-width: 3; }

.document { display: flex; flex-direction: column; min-width: 0; min-height: 0; }
.canvas { flex: 1; min-height: 0; background: #fff; }
.plan { display: block; width: 100%; height: 100%; }
.wall { fill: none; stroke: #000; stroke-width: 2; }
.footing { fill: none; stroke: #000; stroke-width: 3; }
.dash { stroke-dasharray: 64 27; }
.room { fill: #1f3f78; text-anchor: middle; font-family: "Liberation Sans", Arial, sans-serif; }
```
